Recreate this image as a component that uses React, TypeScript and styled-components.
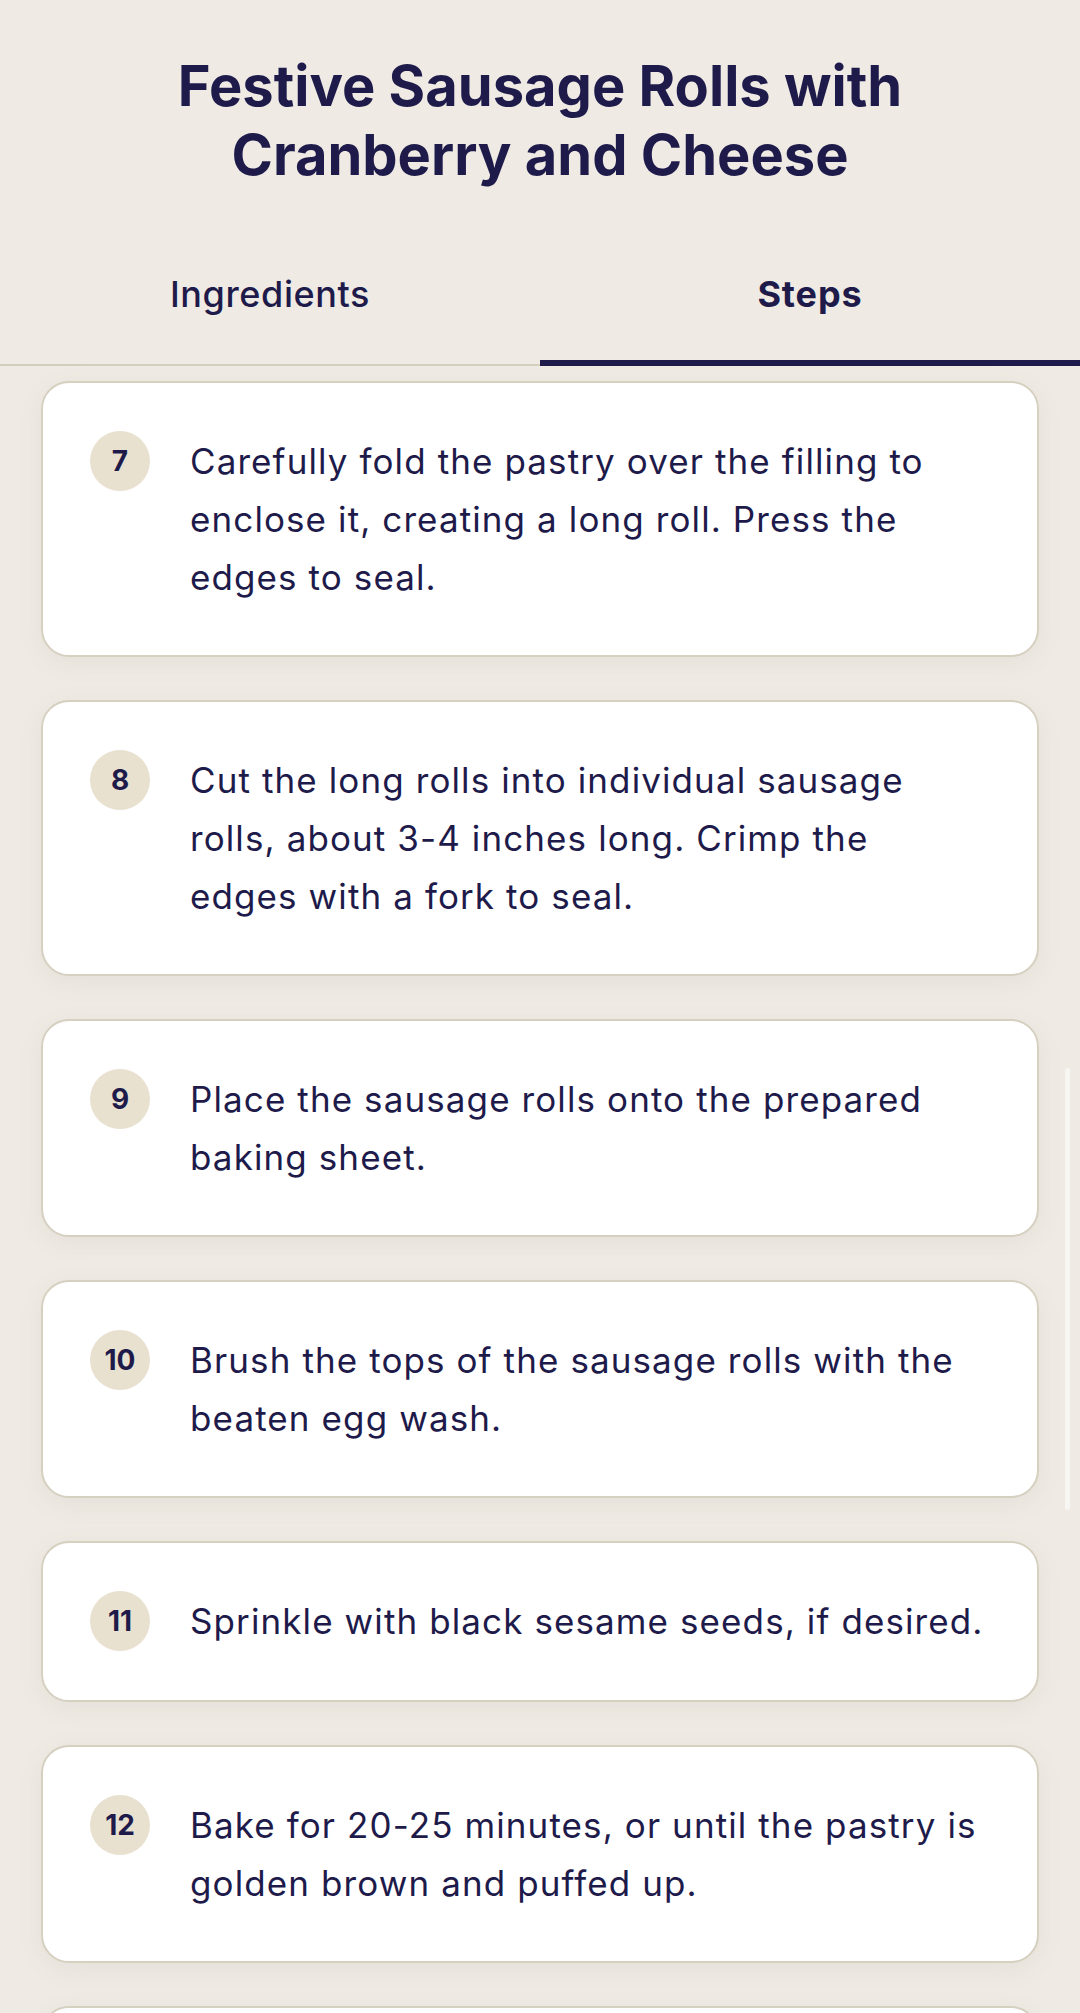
import React from 'react';
import styled, { createGlobalStyle } from 'styled-components';

const GlobalStyle = createGlobalStyle`
  html, body {
    margin: 0;
    padding: 0;
    background: #efebe4;
  }
  body {
    font-family: Inter, "Noto Sans", sans-serif;
    color: #1e1b4b;
  }
`;

type Step = {
  num: number
  text: string
}

const steps: Step[] = [
  { num: 7, text: 'Carefully fold the pastry over the filling to enclose it, creating a long roll. Press the edges to seal.' },
  { num: 8, text: 'Cut the long rolls into individual sausage rolls, about 3-4 inches long. Crimp the edges with a fork to seal.' },
  { num: 9, text: 'Place the sausage rolls onto the prepared baking sheet.' },
  { num: 10, text: 'Brush the tops of the sausage rolls with the beaten egg wash.' },
  { num: 11, text: 'Sprinkle with black sesame seeds, if desired.' },
  { num: 12, text: 'Bake for 20-25 minutes, or until the pastry is golden brown and puffed up.' },
  { num: 13, text: 'Let cool for a few minutes before serving.' },
];

const StepCard = (props: Step) => {
  return (
    <Card>
      <Badge>{props.num}</Badge>
      <StepText>{props.text}</StepText>
    </Card>
  );
};

export default function App() {
  return (
    <Page>
      <GlobalStyle />
      <Header>
        <Title>Festive Sausage Rolls with Cranberry and Cheese</Title>
      </Header>
      <Tabs>
        <Tab>Ingredients</Tab>
        <Tab active>Steps</Tab>
      </Tabs>
      <List>
        {steps.map((s) => (
          <StepCard key={s.num} num={s.num} text={s.text} />
        ))}
      </List>
      <ScrollThumb />
    </Page>
  );
}

const Page = styled.div`
  width: 1080px;
  height: 2013px;
  overflow: hidden;
  position: relative;
  background: #efebe4;
`;

const Header = styled.div`
  padding: 52px 100px 0;
  display: flex;
  justify-content: center;
`;

const Title = styled.h1`
  margin: 0;
  text-align: center;
  font-size: 56px;
  line-height: 69px;
  font-weight: 700;
  letter-spacing: 0;
  color: #1e1b4b;
  max-width: 800px;
`;

const Tabs = styled.div`
  margin-top: 64px;
  display: grid;
  grid-template-columns: 1fr 1fr;
  border-bottom: 2px solid #d4cebf;
`;

const Tab = styled.div<{ active?: boolean }>`
  height: 112px;
  display: flex;
  align-items: center;
  justify-content: center;
  padding-bottom: 26px;
  box-sizing: border-box;
  font-size: 36px;
  letter-spacing: ${(p) => (p.active ? '0.9px' : '0.6px')};
  font-weight: ${(p) => (p.active ? 700 : 500)};
  color: #1e1b4b;
  border-bottom: 6px solid ${(p) => (p.active ? '#1e1b4b' : 'transparent')};
  margin-bottom: -2px;
`;

const List = styled.div`
  padding: 15px 41px 0 41px;
  display: flex;
  flex-direction: column;
  gap: 43px;
`;

const Card = styled.div`
  background: #ffffff;
  border: 2px solid #d6d0c1;
  border-radius: 28px;
  box-shadow: 0 6px 24px rgba(120, 105, 80, 0.08);
  padding: 49px 50px 49px 47px;
  display: flex;
  align-items: flex-start;
  gap: 40px;
`;

const Badge = styled.div`
  flex: none;
  width: 60px;
  height: 60px;
  margin-top: -1px;
  border-radius: 50%;
  background: #e9e1cf;
  display: flex;
  align-items: center;
  justify-content: center;
  font-size: 28px;
  font-weight: 700;
  color: #1e1b4b;
`;

const StepText = styled.p`
  margin: 0;
  font-size: 35px;
  line-height: 58px;
  letter-spacing: 1.1px;
  font-weight: 400;
  color: #1e1b4b;
`;

const ScrollThumb = styled.div`
  position: absolute;
  right: 10px;
  top: 1068px;
  width: 5px;
  height: 442px;
  border-radius: 3px;
  background: rgba(255, 255, 255, 0.55);
`;
